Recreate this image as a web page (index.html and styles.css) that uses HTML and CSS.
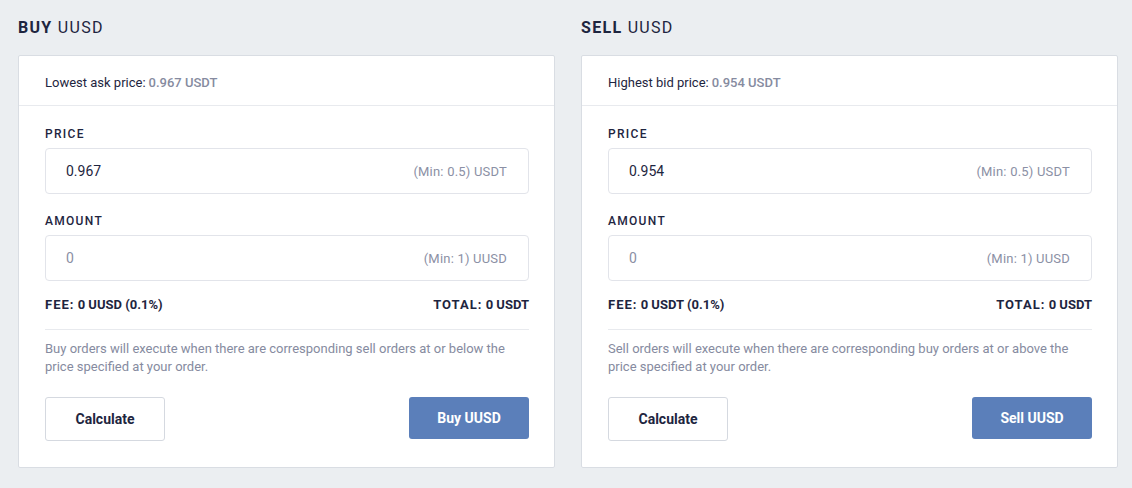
FILE: index.html
```html
<!DOCTYPE html>
<html>
<head>
<meta charset="utf-8">
<link rel="stylesheet" href="styles.css">
</head>
<body>
<div class="page">
  <section class="panel">
    <h2 class="title"><b>BUY</b> UUSD</h2>
    <div class="card">
      <div class="card-head">Lowest ask price: <span class="muted-b">0.967 USDT</span></div>
      <div class="card-body">
        <div class="label">PRICE</div>
        <div class="field"><span class="val">0.967</span><span class="hint">(Min: 0.5) USDT</span></div>
        <div class="label gap">AMOUNT</div>
        <div class="field"><span class="val ph">0</span><span class="hint">(Min: 1) UUSD</span></div>
        <div class="sum">
          <span><span class="k">FEE:</span> 0 UUSD (0.1%)</span>
          <span><span class="k">TOTAL:</span> 0 USDT</span>
        </div>
        <p class="desc">Buy orders will execute when there are corresponding sell orders at or below the price specified at your order.</p>
        <div class="actions">
          <button class="btn btn-light">Calculate</button>
          <button class="btn btn-primary">Buy UUSD</button>
        </div>
      </div>
    </div>
  </section>
  <section class="panel">
    <h2 class="title"><b>SELL</b> UUSD</h2>
    <div class="card">
      <div class="card-head">Highest bid price: <span class="muted-b">0.954 USDT</span></div>
      <div class="card-body">
        <div class="label">PRICE</div>
        <div class="field"><span class="val">0.954</span><span class="hint">(Min: 0.5) USDT</span></div>
        <div class="label gap">AMOUNT</div>
        <div class="field"><span class="val ph">0</span><span class="hint">(Min: 1) UUSD</span></div>
        <div class="sum">
          <span><span class="k">FEE:</span> 0 USDT (0.1%)</span>
          <span><span class="k">TOTAL:</span> 0 USDT</span>
        </div>
        <p class="desc">Sell orders will execute when there are corresponding buy orders at or above the price specified at your order.</p>
        <div class="actions">
          <button class="btn btn-light">Calculate</button>
          <button class="btn btn-primary">Sell UUSD</button>
        </div>
      </div>
    </div>
  </section>
</div>
</body>
</html>
```

FILE: styles.css
```css
* { box-sizing: border-box; }
html, body {
  margin: 0;
  padding: 0;
  background: #ebeef1;
  font-family: Roboto, "Liberation Sans", Arial, sans-serif;
  color: #1e2540;
}
.page {
  display: grid;
  grid-template-columns: 537px 537px;
  column-gap: 26px;
  padding: 0 14px 0 18px;
}
.title {
  margin: 0;
  height: 55px;
  padding-top: 18px;
  font-size: 16px;
  line-height: 20px;
  font-weight: 400;
  letter-spacing: 1.3px;
}
.title b { font-weight: 700; }
.card {
  background: #fff;
  border: 1px solid #d9dde3;
  border-radius: 2px;
}
.card-head {
  height: 50px;
  border-bottom: 1px solid #e8eaee;
  padding: 3px 26px 0;
  display: flex;
  align-items: center;
  font-size: 13px;
  color: #1e2540;
}
.muted-b {
  color: #868ba0;
  font-weight: 500;
  margin-left: 3px;
}
.card-body {
  padding: 20px 25px 26px 26px;
}
.label {
  font-size: 12px;
  line-height: 16px;
  font-weight: 500;
  letter-spacing: 1.3px;
  color: #1e2540;
}
.label.gap { margin-top: 19px; }
.field {
  margin-top: 6px;
  height: 46px;
  border: 1px solid #e2e4ea;
  border-radius: 4px;
  display: flex;
  align-items: center;
  justify-content: space-between;
  padding: 0 21px 0 20px;
}
.val {
  font-size: 14px;
  color: #1e2540;
}
.val.ph { color: #8b90a5; }
.hint {
  font-size: 13px;
  letter-spacing: 0.2px;
  color: #8b90a5;
}
.sum {
  margin-top: 16px;
  display: flex;
  justify-content: space-between;
  font-size: 13px;
  line-height: 16px;
  font-weight: 700;
  padding-bottom: 16px;
  border-bottom: 1px solid #e8eaee;
}
.sum .k { letter-spacing: 1px; }
.desc {
  margin: 10px 0 0;
  font-size: 13px;
  line-height: 18px;
  color: #868ba0;
  padding-right: 10px;
}
.actions {
  margin-top: 21px;
  display: flex;
  justify-content: space-between;
  align-items: flex-start;
}
.btn {
  width: 120px;
  font-family: inherit;
  font-size: 14px;
  font-weight: 700;
  border-radius: 3px;
  cursor: pointer;
}
.btn-light {
  height: 44px;
  background: #fff;
  border: 1px solid #d5d9e0;
  color: #1e2540;
}
.btn-primary {
  height: 42px;
  background: #5b7fba;
  border: none;
  color: #fff;
}
```
